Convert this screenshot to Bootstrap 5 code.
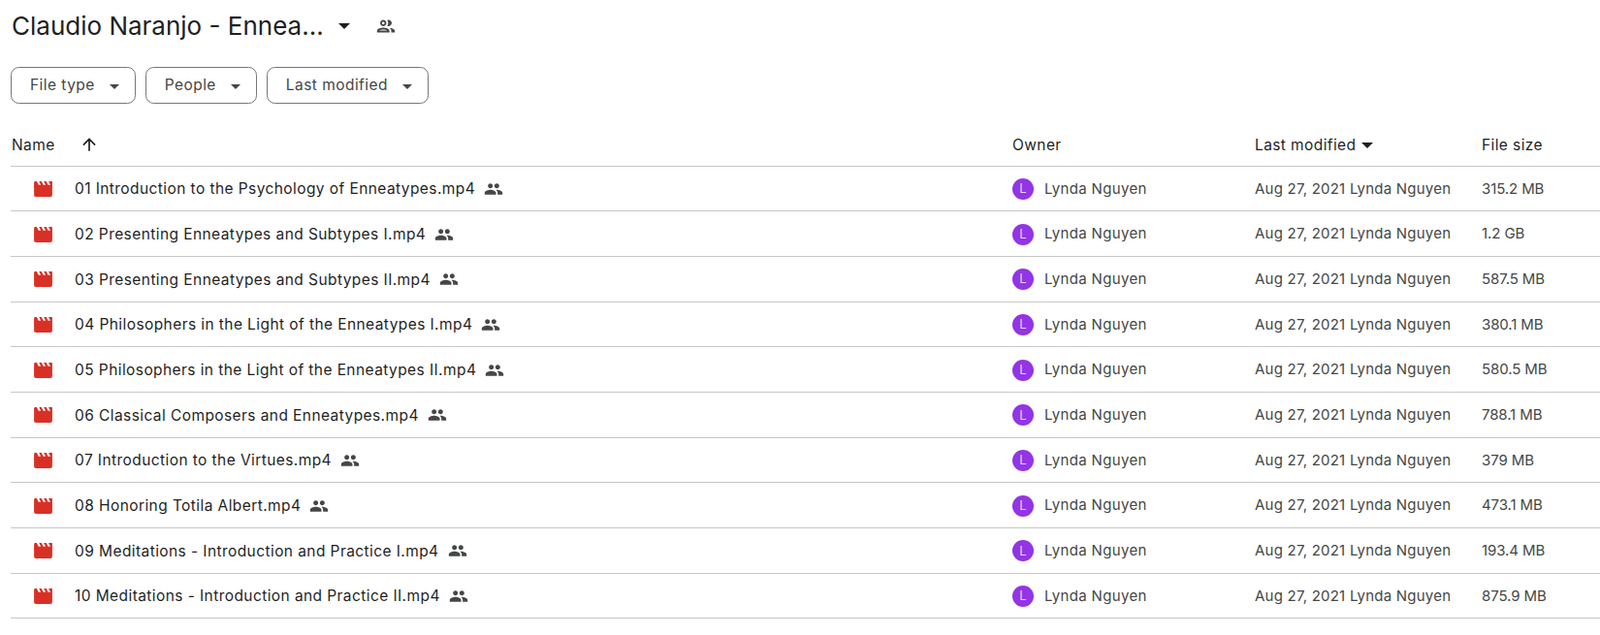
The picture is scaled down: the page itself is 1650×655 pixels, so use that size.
<!DOCTYPE html>
<html lang="en">
<head>
<meta charset="utf-8">
<title>Claudio Naranjo - Enneagram</title>
<link href="https://cdn.jsdelivr.net/npm/bootstrap@5.3.0/dist/css/bootstrap.min.css" rel="stylesheet">
<style>
body{font-family:Inter,Roboto,"Liberation Sans",sans-serif;color:#1f1f1f;background:#fff;overflow:hidden}
.drive-head{height:54px;padding-left:12px}
.drive-title{font-size:26px;font-weight:400;line-height:1;margin:0;color:#1f1f1f}
.drive-tcaret{width:0;height:0;border-left:6px solid transparent;border-right:6px solid transparent;border-top:6px solid #1f1f1f;margin-left:15px}
.drive-shared{margin-left:26px;color:#444746}
.drive-filters{padding:15px 0 0 11px;gap:10px}
.btn.drive-chip{height:38px;border:1px solid #747775;border-radius:8.5px;color:#444746;font-size:15.5px;letter-spacing:.45px;padding:0 16px 0 19px;gap:15px;background:#fff;display:flex;align-items:center}
.drive-ccaret{width:0;height:0;border-left:5px solid transparent;border-right:5px solid transparent;border-top:5px solid #444746;margin-top:2px}
.drive-table{table-layout:fixed;width:1650px;margin:13px 0 0 11px;font-size:15px;--bs-table-border-color:#c7c7c7}
.drive-table th,.drive-table td{padding:0;vertical-align:middle;border-bottom:1px solid #c7c7c7;white-space:nowrap}
.drive-table th{height:51px;font-weight:400;color:#1f1f1f;padding-top:8px;font-size:15.5px;letter-spacing:.4px}
.drive-table th:first-child{padding-left:1px}
.drive-table td{height:46.7px;color:#444746;padding-top:1px;letter-spacing:.22px}
.drive-table td.drive-name{color:#1f1f1f;font-size:15.5px;letter-spacing:.42px}
.drive-table td.drive-owner{letter-spacing:.33px}
.drive-table td.drive-size{letter-spacing:-.1px}
.drive-vid{margin:0 23px 0 24px;flex:none}
.drive-ppl{margin-left:9px;flex:none}
.drive-av{width:22px;height:22px;border-radius:50%;background:#9334e6;color:#e8d5fb;font-size:13px;margin-right:11px;flex:none}
.drive-arrow{margin-left:25px}
.drive-hcaret{display:inline-block;width:0;height:0;border-left:6px solid transparent;border-right:6px solid transparent;border-top:6px solid #1f1f1f;margin-left:6px;vertical-align:2px}
</style>
</head>
<body>
<svg width="0" height="0" class="position-absolute">
<symbol id="i-ppl" viewBox="0 0 24 24"><path d="M16 11c1.66 0 2.99-1.34 2.99-3S17.66 5 16 5c-1.66 0-3 1.34-3 3s1.34 3 3 3zm-8 0c1.66 0 2.99-1.34 2.99-3S9.66 5 8 5C6.34 5 5 6.34 5 8s1.34 3 3 3zm0 2c-2.33 0-7 1.17-7 3.5V19h14v-2.5c0-2.33-4.67-3.5-7-3.5zm8 0c-.29 0-.62.02-.97.05 1.16.84 1.97 1.97 1.97 3.45V19h6v-2.5c0-2.33-4.67-3.5-7-3.5z"/></symbol>
<symbol id="i-vid" viewBox="0 0 20 17"><path d="M1.5 0H3l2 4h2.5l-2-4h2.7l2 4h2.5l-2-4h2.7l2 4h2.5l-2-4h1.6A1.5 1.5 0 0 1 20 1.5V15a2 2 0 0 1-2 2H2a2 2 0 0 1-2-2V1.5A1.5 1.5 0 0 1 1.5 0z"/></symbol>
</svg>
<header class="drive-head d-flex align-items-center">
<h1 class="drive-title">Claudio Naranjo - Ennea...</h1>
<span class="drive-tcaret"></span>
<svg class="drive-shared" width="22" height="22" viewBox="0 0 24 24" fill="currentColor"><path d="M9 13.75c-2.34 0-7 1.17-7 3.5V19h14v-1.75c0-2.33-4.66-3.5-7-3.5zM4.34 17c.84-.58 2.87-1.25 4.66-1.25s3.82.67 4.66 1.25H4.34zM9 12c1.93 0 3.5-1.57 3.5-3.5S10.93 5 9 5 5.5 6.57 5.5 8.5 7.07 12 9 12zm0-5c.83 0 1.5.67 1.5 1.5S9.83 10 9 10s-1.5-.67-1.5-1.5S8.17 7 9 7zm7.04 6.81c1.16.84 1.96 1.96 1.96 3.44V19h4v-1.75c0-2.02-3.5-3.17-5.96-3.44zM15 12c1.93 0 3.5-1.57 3.5-3.5S16.93 5 15 5c-.54 0-1.04.13-1.5.35.63.89 1 1.98 1 3.15s-.37 2.26-1 3.15c.46.22.96.35 1.5.35z"/></svg>
</header>
<div class="drive-filters d-flex">
<button class="btn drive-chip">File type<span class="drive-ccaret"></span></button>
<button class="btn drive-chip">People<span class="drive-ccaret"></span></button>
<button class="btn drive-chip">Last modified<span class="drive-ccaret"></span></button>
</div>
<table class="table drive-table mb-0">
<colgroup><col style="width:1033px"><col style="width:250px"><col style="width:234px"><col></colgroup>
<thead><tr>
<th><span class="d-inline-flex align-items-center">Name<svg class="drive-arrow" width="20" height="20" viewBox="0 0 24 24" fill="#1f1f1f"><path d="M11 20V7.8l-5.6 5.6L4 12l8-8 8 8-1.4 1.4L13 7.8V20z"/></svg></span></th>
<th>Owner</th>
<th>Last modified<span class="drive-hcaret"></span></th>
<th>File size</th>
</tr></thead>
<tbody id="rows"></tbody>
</table>
<script>
const data=[["01 Introduction to the Psychology of Enneatypes.mp4","315.2 MB"],["02 Presenting Enneatypes and Subtypes I.mp4","1.2 GB"],["03 Presenting Enneatypes and Subtypes II.mp4","587.5 MB"],["04 Philosophers in the Light of the Enneatypes I.mp4","380.1 MB"],["05 Philosophers in the Light of the Enneatypes II.mp4","580.5 MB"],["06 Classical Composers and Enneatypes.mp4","788.1 MB"],["07 Introduction to the Virtues.mp4","379 MB"],["08 Honoring Totila Albert.mp4","473.1 MB"],["09 Meditations - Introduction and Practice I.mp4","193.4 MB"],["10 Meditations - Introduction and Practice II.mp4","875.9 MB"]];
document.getElementById('rows').innerHTML=data.map(([n,s])=>`<tr>
<td class="drive-name"><div class="d-flex align-items-center"><svg class="drive-vid" width="19" height="16" fill="#d93025"><use href="#i-vid"/></svg><span>${n}</span><svg class="drive-ppl" width="20" height="20" fill="#444746"><use href="#i-ppl"/></svg></div></td>
<td class="drive-owner"><div class="d-flex align-items-center"><span class="drive-av d-flex align-items-center justify-content-center">L</span>Lynda Nguyen</div></td>
<td>Aug 27, 2021 Lynda Nguyen</td>
<td class="drive-size">${s}</td></tr>`).join('');
</script>
<script src="https://cdn.jsdelivr.net/npm/bootstrap@5.3.0/dist/js/bootstrap.bundle.min.js"></script>
</body>
</html>
